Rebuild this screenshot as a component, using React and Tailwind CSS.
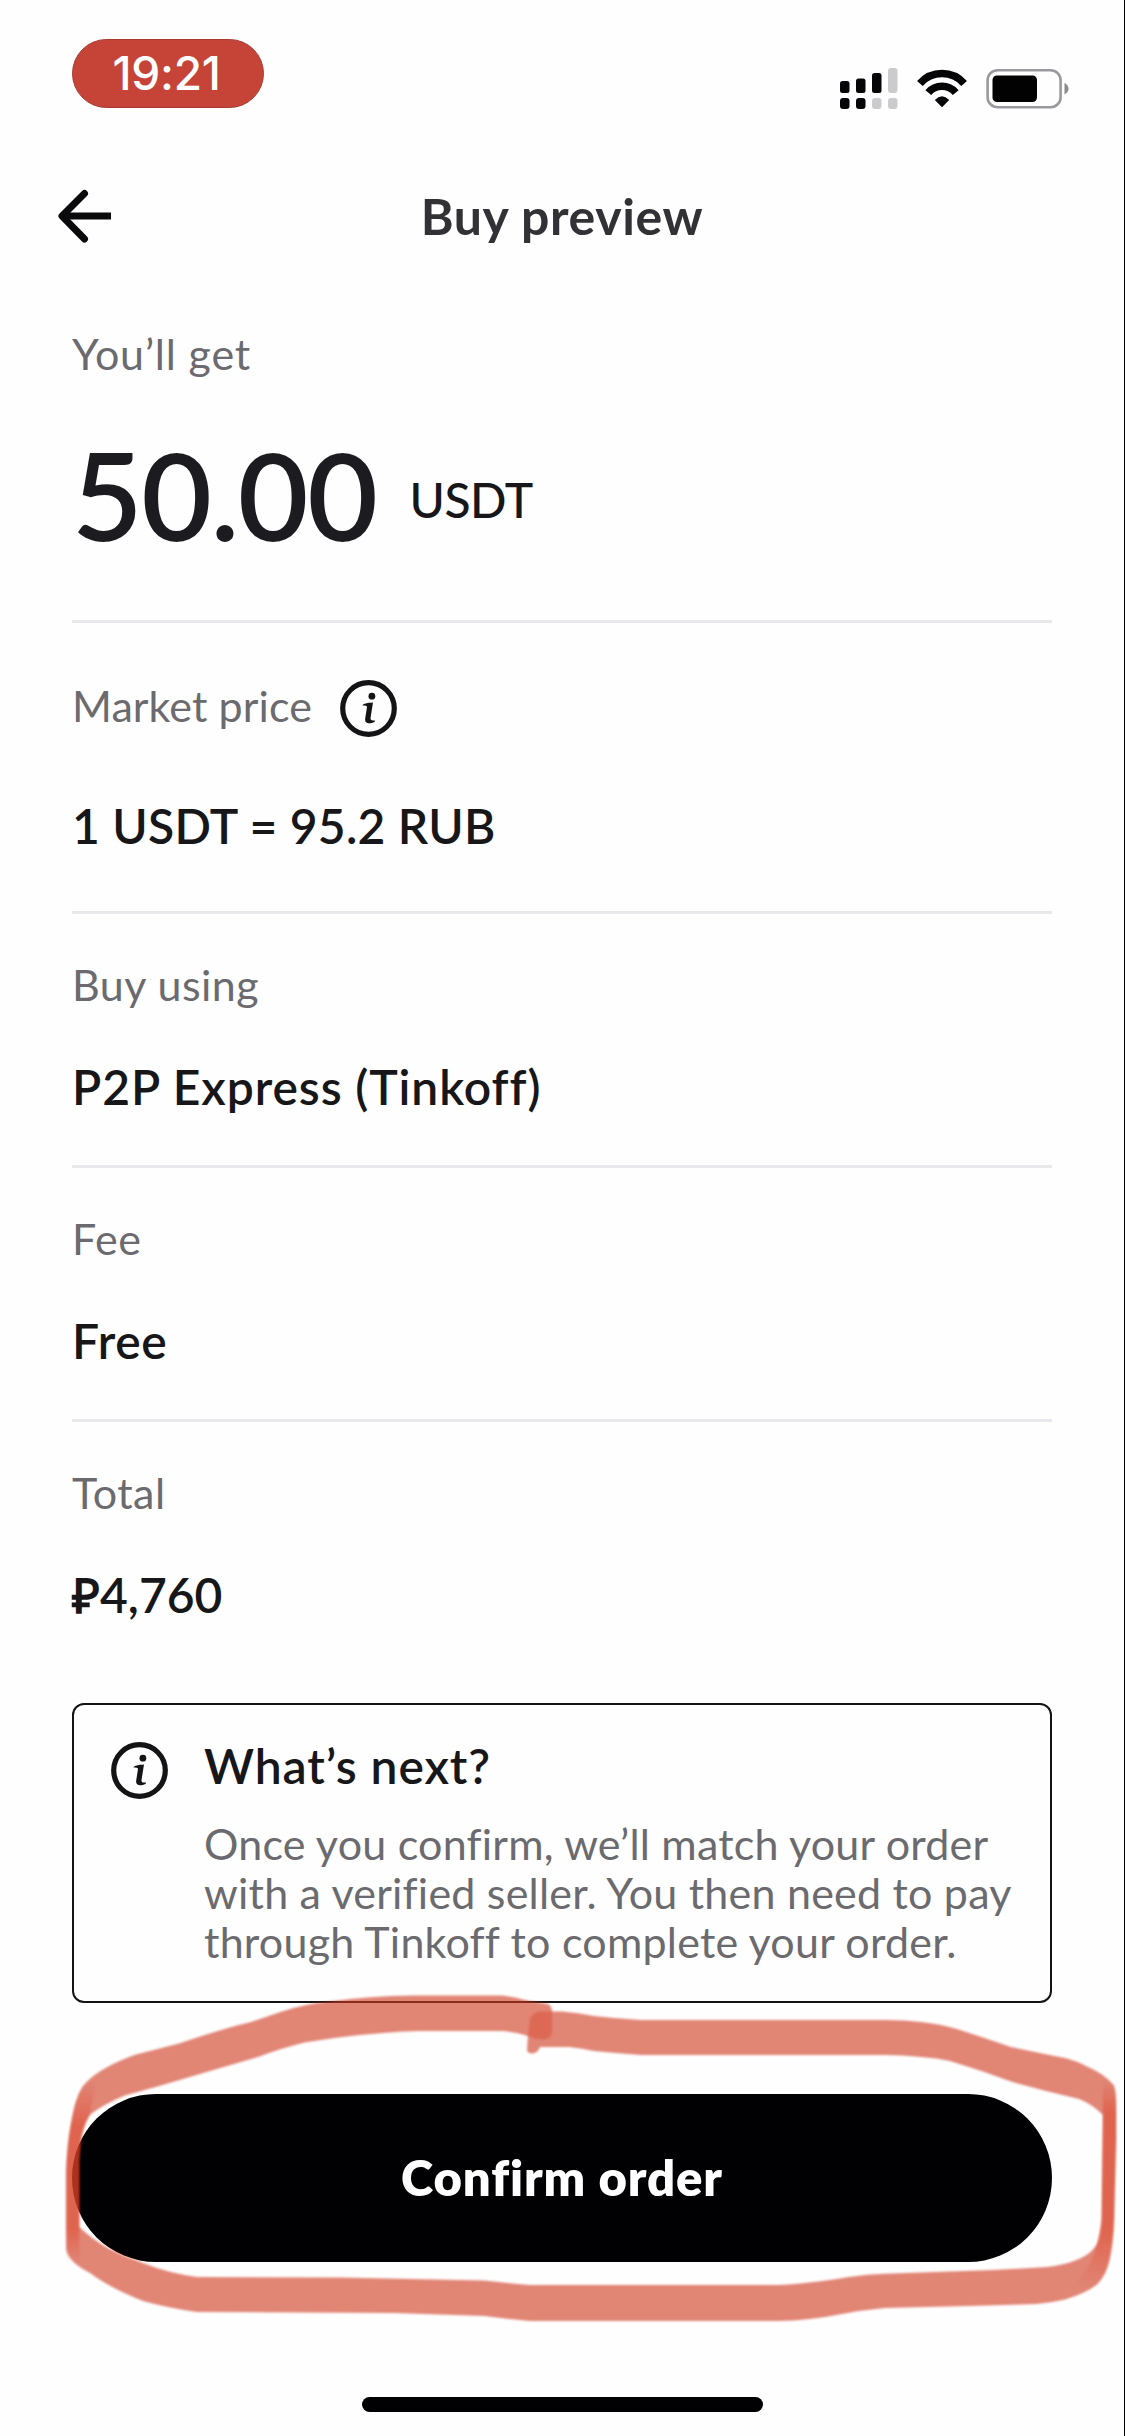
import React from 'react';

function SignalIcon() {
  return (
    <svg className="h-[42px] w-[60px]" viewBox="838 68 60 42">
      <g fill="#050507">
        <rect x="839" y="81" width="9.5" height="12" rx="2.5" />
        <rect x="855" y="78.5" width="9.5" height="14.5" rx="2.5" />
        <rect x="871" y="73" width="9.5" height="20" rx="2.5" />
        <rect x="839" y="98" width="9.5" height="11" rx="3" />
        <rect x="855" y="98" width="9.5" height="11" rx="3" />
      </g>
      <g fill="#cbcacd">
        <rect x="887" y="68" width="9.5" height="25" rx="3" />
        <rect x="871" y="98" width="9.5" height="11" rx="3" />
        <rect x="887" y="98" width="9.5" height="11" rx="3" />
      </g>
    </svg>
  );
}

function WifiIcon() {
  return (
    <svg className="h-[42px] w-[54px]" viewBox="914.5 68 54 42">
      <g fill="none" stroke="#050507" strokeWidth="7.6">
        <path d="M919.4 83.4 A29.5 29.5 0 0 1 963.6 83.4" />
        <path d="M927.8 92.6 A18 18 0 0 1 955.2 92.6" />
      </g>
      <path d="M934.3 100 Q941.5 92.6 948.7 100 L941.5 107.3 Z" fill="#050507" />
    </svg>
  );
}

function BatteryIcon() {
  return (
    <svg className="h-[42px] w-[84px]" viewBox="986 68 84 42">
      <rect x="987.6" y="70.2" width="73" height="37" rx="10" fill="none" stroke="#9a9a9e" strokeWidth="2.6" />
      <rect x="992.5" y="75.5" width="44.5" height="26.5" rx="4.5" fill="#020203" />
      <path d="M1064.5 83 Q1068.5 85 1068.5 88.8 Q1068.5 92.5 1064.5 94.5 Z" fill="#8b8b8f" />
    </svg>
  );
}

function InfoIcon() {
  return (
    <svg className="h-[57px] w-[57px] shrink-0" viewBox="0 0 57 57" fill="none">
      <circle cx="28.5" cy="28.5" r="25.8" stroke="#141416" strokeWidth="5.2" />
      <circle cx="31.9" cy="16.2" r="3.4" fill="#141416" />
      <path d="M22.6 25.4 C22.6 23.6 28 23 33 22.6 L30.6 37.5 C30.2 40.2 31.4 40.8 35 40.4 L34.6 42 C29 44.2 24.4 43.6 25.2 38.5 L27 27 C27.2 25.6 25 25.6 22.6 25.4 Z" fill="#141416" />
    </svg>
  );
}

function Label({ children, tracking = 'tracking-[0.5px]' }) {
  return <div className={`text-[43px] leading-[52px] text-[#6b6b6f] ${tracking}`}>{children}</div>;
}

function Section({ label, value, tracking = 'tracking-[0.9px]', last }) {
  return (
    <section className={last ? 'pt-[45px]' : 'border-b-[3px] border-[#e8e7eb] pt-[45px] pb-[49px]'}>
      <Label>{label}</Label>
      <div className={`mt-[47px] text-[48px] leading-[58px] font-semibold text-[#17171a] ${tracking}`}>{value}</div>
    </section>
  );
}

function MarkerLoop() {
  return (
    <svg className="pointer-events-none absolute top-0 left-0 h-[2436px] w-[1125px]" viewBox="0 0 1125 2436">
      <defs>
        <filter id="soft" x="-5%" y="-5%" width="110%" height="110%" colorInterpolationFilters="sRGB">
          <feGaussianBlur stdDeviation="0.8" />
        </filter>
        <linearGradient id="left" x1="0" y1="2080" x2="0" y2="2262" gradientUnits="userSpaceOnUse">
          <stop offset="0" stopColor="#de4226" stopOpacity="0" />
          <stop offset="0.25" stopColor="#de4226" />
          <stop offset="0.82" stopColor="#de4226" />
          <stop offset="1" stopColor="#de4226" stopOpacity="0" />
        </linearGradient>
        <linearGradient id="right" x1="0" y1="2080" x2="0" y2="2288" gradientUnits="userSpaceOnUse">
          <stop offset="0" stopColor="#de4226" stopOpacity="0" />
          <stop offset="0.15" stopColor="#de4226" />
          <stop offset="0.72" stopColor="#de4226" />
          <stop offset="1" stopColor="#de4226" stopOpacity="0" />
        </linearGradient>
      </defs>
      <path
        filter="url(#soft)"
        opacity="0.62"
        fill="#d03c22"
        fillRule="evenodd"
        d="M66.3 2249 L66.3 2170 Q67 2145 71.7 2120 Q75 2098 83 2086 Q92 2075 107.5 2067 Q120 2060 136 2054.5 L179 2043.5 Q225 2028 251 2022 L282 2011.500 Q304 2004 330 2001.5 Q370 1996 412 1995.5 L502 1995.5 Q515 1997 527 2000.5 L548 2004 Q552 2006 552 2011.5 L562 2011.4 Q578 2012.5 594 2016 Q616 2018.5 641 2020 L885 2020 Q905 2020 921 2022 Q940 2024 957 2029 Q985 2038 1011 2047 Q1040 2053 1065 2058 Q1077 2061 1086 2066 Q1105 2074 1114 2085.6 Q1116 2092 1116 2100 L1116 2140 L1114 2219 Q1113 2244 1109.5 2260 Q1106 2276 1097 2284.6 Q1085 2294 1065 2299.4 Q1050 2303 1036 2304 L968 2306 L885 2308 Q863 2310 842 2314 Q810 2320.500 777 2321 L530 2321 Q507 2319 484 2316 L394 2313 L197 2312 Q168 2308 143 2301 Q110 2288 90 2273 Q68 2262 66.3 2249 Z
        M79.3 2227 Q92 2239 107.5 2248 Q125 2257 143 2263 Q168 2273 197 2277 L340.5 2277.6 L484 2280.6 Q508 2283 530 2285 L777 2285 Q805 2284 849 2277 Q868 2274 885 2273.7 L993 2270 L1047 2267 Q1065 2265 1079 2259 Q1091 2254 1097 2244 Q1101 2233 1101.7 2219 L1103 2115 Q1092 2104 1079 2099 Q1045 2091 1011 2081.6 Q980 2070 950 2061 Q937 2058 921 2057 Q903 2055 885 2055 L641 2055 Q615 2053 594 2051 Q580 2048 569 2047 L540 2047 Q538 2053 532 2053.5 Q527 2053 527 2050 L528 2036 Q516 2032 502 2031 L419 2031 Q360 2033 304.7 2042.5 Q282 2048 258 2057 L200.7 2073.7 L161 2085.6 L125 2095.5 Q104 2104 89.6 2115 Q82 2128 80.6 2142.5 L79.3 2160 Z"
      />
      <path
        opacity="0.48"
        fill="url(#left)"
        filter="url(#soft)"
        d="M66.3 2262 L66.3 2170 Q68 2120 82 2086 L96 2080 L89.6 2115 Q82 2128 80.6 2142.5 L79.3 2160 V2250 Q80 2262 84 2268 Z"
      />
      <path
        opacity="0.48"
        fill="url(#right)"
        filter="url(#soft)"
        d="M1103 2078 L1114 2085.6 Q1116 2092 1116 2100 L1116 2140 L1114 2219 Q1113 2244 1109.5 2260 Q1106 2276 1092 2288 L1076 2284 Q1097 2262 1101.7 2219 L1103 2115 Z"
      />
      <path opacity="0.42" fill="#d8432a" filter="url(#soft)" d="M530 2019 Q532 2013 540 2011.5 H552 V2032 Q551 2039 544 2039.5 Q534 2039 528 2036 Z" />
    </svg>
  );
}

export default function App() {
  return (
    <div className="relative flex h-[2436px] w-[1125px] flex-col overflow-hidden border-r border-black bg-[#fefefe] font-[Lato,sans-serif]">
      <div className="flex h-[160px] shrink-0 justify-between pr-[54px] pl-[72px]">
        <div className="mt-[39px] flex h-[69px] w-[192px] items-center justify-center rounded-full border border-[#a93a30] bg-[#c64437] font-[Inter,sans-serif] text-[46px] font-medium text-white">
          <span className="-ml-[3px] tracking-[-0.3px]">19:21</span>
        </div>
        <div className="mt-[68px] flex h-[42px]">
          <SignalIcon />
          <div className="ml-[16px]"><WifiIcon /></div>
          <div className="ml-[17px]"><BatteryIcon /></div>
        </div>
      </div>

      <header className="grid h-[112px] shrink-0 grid-cols-[1fr_auto_1fr] items-center">
        <svg className="ml-[56px] h-[60px] w-[58px]" viewBox="56 186 58 60" fill="none" stroke="#0a0a0c" strokeWidth="7">
          <path d="M111 216 H62" />
          <path d="M84.5 193.5 L62 216 L84.5 239" strokeLinecap="round" strokeLinejoin="round" />
        </svg>
        <h1 className="text-[50px] leading-[60px] font-bold tracking-[0.6px] text-[#323135]">Buy preview</h1>
      </header>

      <main className="flex w-[1052px] shrink-0 flex-col pl-[72px]">
        <section className="border-b-[3px] border-[#e8e7eb] pt-[56px] pb-[53px]">
          <Label tracking="tracking-[0.8px]">You’ll get</Label>
          <div className="mt-[41px] flex h-[146px] items-center">
            <span className="text-[122px] leading-[146px] font-semibold tracking-[-1.5px] text-[#1c1b1f]">50.00</span>
            <span className="mt-3 ml-[33px] text-[48px] leading-[58px] font-medium tracking-[-0.4px] text-[#17171a]">USDT</span>
          </div>
        </section>

        <section className="border-b-[3px] border-[#e8e7eb] pt-[55px] pb-[56px]">
          <div className="flex h-[52px] items-center">
            <div className="mt-[3px]">
              <Label tracking="tracking-[0.1px]">Market price</Label>
            </div>
            <div className="mt-2 ml-[28px]"><InfoIcon /></div>
          </div>
          <div className="mt-[67px] text-[48px] leading-[58px] font-semibold tracking-[0.25px] text-[#17171a]">1 USDT = 95.2 RUB</div>
        </section>

        <Section label="Buy using" value="P2P Express (Tinkoff)" />
        <Section label="Fee" value="Free" tracking="tracking-[0.6px]" />
        <Section label="Total" value="₽4,760" tracking="tracking-[0px]" last />

        <section className="mt-[79px] flex h-[300px] rounded-[12px] border-[2.5px] border-[#141416] pl-[37px]">
          <div className="mt-[37px]"><InfoIcon /></div>
          <div className="mt-[32px] ml-[36px]">
            <h2 className="text-[48px] leading-[58px] font-semibold tracking-[0.9px] text-[#17171a]">What’s next?</h2>
            <p className="mt-[24px] text-[43px] leading-[49px] tracking-[0.22px] whitespace-nowrap text-[#6b6b6f]">
              Once you confirm, we’ll match your order
              <br />
              with a verified seller. You then need to pay
              <br />
              through Tinkoff to complete your order.
            </p>
          </div>
        </section>

        <button className="mt-[91px] h-[168px] rounded-full bg-[#010103] text-[49px] font-extrabold tracking-[0.9px] text-white">
          Confirm order
        </button>
      </main>

      <div className="mt-[135px] ml-[362px] h-[15px] w-[401px] shrink-0 rounded-full bg-[#010103]" />
      <MarkerLoop />
    </div>
  );
}
